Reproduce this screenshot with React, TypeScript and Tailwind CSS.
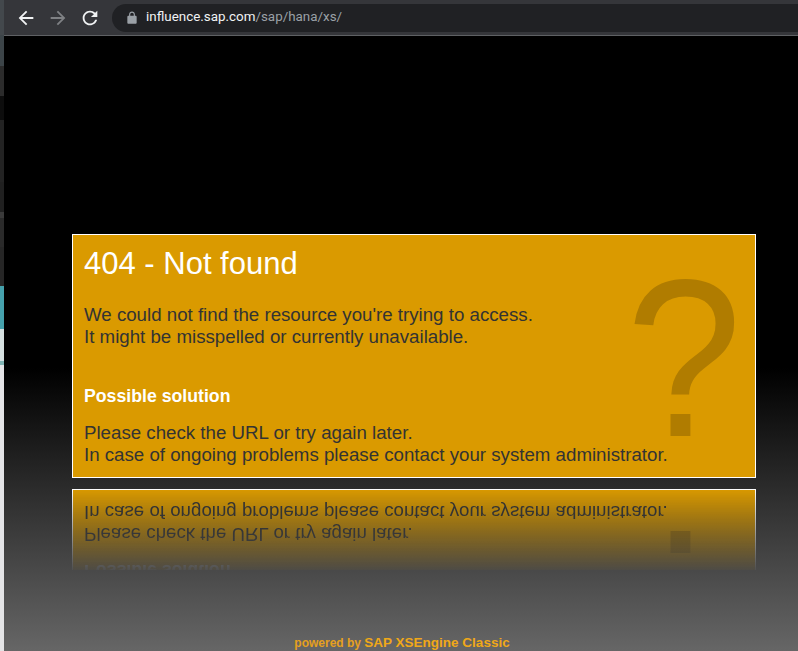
const sliver = [
  'h-[35px] bg-[#43484c]',
  'h-[31px] bg-[#3c4448]',
  'h-[30px] bg-[#2b2b2b]',
  'h-[24px] bg-[#0d0d0d]',
  'h-[62px] bg-[#232323]',
  'h-[30px] bg-[#202020]',
  'h-[6px] bg-[#3a3a3a]',
  'h-[29px] bg-[#2a2a2a]',
  'h-[39px] bg-[#262626]',
  'h-[43px] bg-[#45a1ac]',
  'h-[32px] bg-[#d5dfe0]',
  'h-[4px] bg-[#7fb3b3]',
  'flex-1 bg-[#e4e4e6]',
];

function NavIcon({ d, className }: { d: string; className: string }) {
  return (
    <div className="flex w-[32px] justify-center">
      <svg viewBox="0 0 24 24" className={className} fill="currentColor">
        <path d={d} />
      </svg>
    </div>
  );
}

function ErrorCard() {
  return (
    <div className="relative h-[244px] w-[684px] overflow-hidden border border-white bg-[#da9a00] px-[11px] font-['Liberation_Sans',sans-serif] text-[18.7px] leading-[22px] text-[#333333]">
      <span className="absolute left-[553px] top-[-5px] origin-left scale-x-[0.93] text-[224px] leading-[256px] text-[#b07c00]">?</span>
      <div className="relative">
        <h1 className="pt-[10px] text-[31px] leading-[38px] text-white">404 - Not found</h1>
        <p className="mt-[21px]">We could not find the resource you're trying to access.</p>
        <p>It might be misspelled or currently unavailable.</p>
        <h2 className="mt-[37px] text-[17.7px] font-bold text-white">Possible solution</h2>
        <p className="mt-[15px]">Please check the URL or try again later.</p>
        <p>In case of ongoing problems please contact your system administrator.</p>
      </div>
    </div>
  );
}

export default function App() {
  return (
    <div className="flex h-[651px] w-[798px] overflow-hidden">
      <div className="flex w-[4px] flex-col">
        {sliver.map((c, i) => (
          <div key={i} className={c} />
        ))}
      </div>
      <div className="flex flex-1 flex-col">
        <header className="flex h-[36px] items-center border-b border-[#5f6164] bg-[#35363a] pl-[6px]">
          <NavIcon className="h-[22px] w-[22px] text-[#f1f3f4]" d="M20 11H7.83l5.59-5.59L12 4l-8 8 8 8 1.41-1.41L7.83 13H20v-2z" />
          <NavIcon className="h-[22px] w-[22px] text-[#7f8184]" d="M12 4l-1.41 1.41L16.17 11H4v2h12.17l-5.58 5.59L12 20l8-8z" />
          <NavIcon className="h-[22px] w-[22px] text-[#f1f3f4]" d="M17.65 6.35A7.958 7.958 0 0 0 12 4c-4.42 0-7.99 3.58-7.99 8s3.57 8 7.99 8c3.73 0 6.84-2.55 7.73-6h-2.08A5.99 5.99 0 0 1 12 18c-3.31 0-6-2.69-6-6s2.69-6 6-6c1.66 0 3.14.69 4.22 1.78L13 11h7V4l-2.35 2.35z" />
          <div className="ml-[6px] flex h-[28px] flex-1 items-center rounded-l-full bg-[#202124] pl-[13px] font-['Roboto',sans-serif] text-[13.4px]">
            <svg viewBox="0 0 24 24" className="h-[14px] w-[14px] text-[#9aa0a6]" fill="currentColor">
              <path d="M18 8h-1V6c0-2.76-2.24-5-5-5S7 3.24 7 6v2H6c-1.1 0-2 .9-2 2v10c0 1.1.9 2 2 2h12c1.1 0 2-.9 2-2V10c0-1.1-.9-2-2-2zM9 6c0-1.66 1.34-3 3-3s3 1.34 3 3v2H9V6z" />
            </svg>
            <span className="ml-[7px] text-[#f1f3f4]">influence.sap.com</span>
            <span className="text-[#9aa0a6]">/sap/hana/xs/</span>
          </div>
        </header>
        <main className="flex flex-1 flex-col bg-[linear-gradient(to_bottom,#000000_0%,#000000_54%,#666666_100%)] pl-[68px]">
          <div className="mt-[198px]">
            <ErrorCard />
          </div>
          <div className="mt-[11px] h-[81px] w-[684px] overflow-hidden [mask-image:linear-gradient(to_bottom,rgba(0,0,0,1)_0%,rgba(0,0,0,0.04)_100%)]">
            <div className="-scale-y-100">
              <ErrorCard />
            </div>
          </div>
          <footer className="mt-auto -ml-[66px] pb-[1px] text-center font-['Liberation_Sans',sans-serif] text-[12px] font-bold leading-[14px] text-[#e6a01e]">
            powered by <span className="text-[13.5px] text-[#f0a818]">SAP XSEngine Classic</span>
          </footer>
        </main>
      </div>
    </div>
  );
}
